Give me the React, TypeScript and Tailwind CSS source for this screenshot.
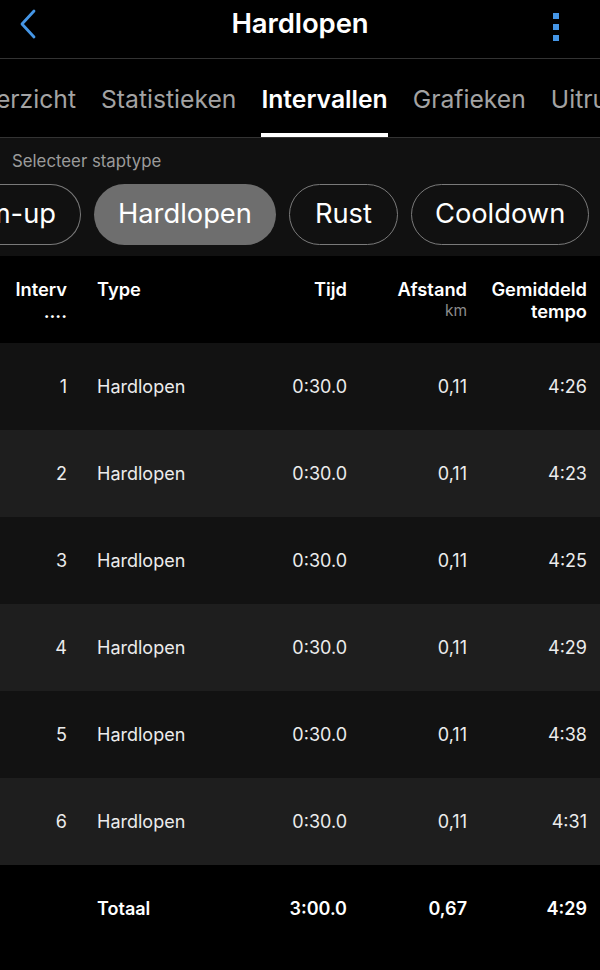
import React from "react";

const rows = [
  ["1", "4:26"],
  ["2", "4:23"],
  ["3", "4:25"],
  ["4", "4:29"],
  ["5", "4:38"],
  ["6", "4:31"],
];

export default function App() {
  return (
    <div className="w-[600px] h-[970px] bg-black text-white overflow-hidden" style={{ fontFamily: "Inter, 'Noto Sans', sans-serif" }}>
      {/* Top bar */}
      <div className="relative h-[58px] flex items-center justify-center pb-[10px]">
        <svg className="absolute left-[18px] top-[9px]" width="22" height="30" viewBox="0 0 22 30" fill="none">
          <polyline points="16,2 4,15 16,28" stroke="#4596e6" strokeWidth="2.8" strokeLinecap="round" strokeLinejoin="round" />
        </svg>
        <div className="text-[27.5px] font-semibold tracking-[-0.1px]">Hardlopen</div>
        <div className="absolute left-[553px] top-[13px] flex flex-col gap-[5px]">
          <div className="w-[6px] h-[6px] bg-[#4596e6]" />
          <div className="w-[6px] h-[6px] bg-[#4596e6]" />
          <div className="w-[6px] h-[6px] bg-[#4596e6]" />
        </div>
      </div>
      {/* Tabs */}
      <div className="h-[80px] border-t border-b border-[#333] overflow-hidden flex items-stretch gap-[25px] whitespace-nowrap text-[24.7px] text-[#a3a3a3]">
        <div className="w-[76px] shrink-0 flex justify-end items-center pt-[4px]">Overzicht</div>
        <div className="shrink-0 flex items-center pt-[4px]">Statistieken</div>
        <div className="shrink-0 flex flex-col items-center justify-center relative text-white font-semibold pt-[4px]">
          <span>Intervallen</span>
          <div className="absolute bottom-0 left-0 right-0 h-[4px] bg-white" />
        </div>
        <div className="shrink-0 flex items-center pt-[4px]">Grafieken</div>
        <div className="shrink-0 flex items-center pt-[4px]">Uitrusting</div>
      </div>
      {/* Step type */}
      <div className="bg-[#111111] h-[118px] pt-[13px]">
        <div className="pl-[12px] text-[16.8px] text-[#9b9b9b] leading-[20px]">Selecteer staptype</div>
        <div className="mt-[13px] flex gap-[13px] overflow-hidden whitespace-nowrap text-[27.3px]">
          <div className="w-[81px] shrink-0 h-[61px] rounded-r-full border border-l-0 border-[#7a7a7a] flex items-center justify-end pr-[24px] overflow-hidden">
            <span>Warm-up</span>
          </div>
          <div className="shrink-0 h-[61px] rounded-full bg-[#6e6e6e] flex items-center px-[24px]">Hardlopen</div>
          <div className="shrink-0 h-[61px] rounded-full border border-[#7a7a7a] flex items-center px-[25px]">Rust</div>
          <div className="shrink-0 h-[61px] rounded-full border border-[#7a7a7a] flex items-center px-[23px]">Cooldown</div>
        </div>
      </div>
      {/* Table header */}
      <div className="h-[87px] grid grid-cols-[67px_160px_120px_120px_120px] pt-[22px] text-[18.3px] font-semibold leading-[22px]">
        <div className="text-right">
          <div>Interv</div>
          <div>....</div>
        </div>
        <div className="pl-[30px]">Type</div>
        <div className="text-right">Tijd</div>
        <div className="text-right">
          <div>Afstand</div>
          <div className="text-[15.5px] font-normal text-[#8a8a8a]">km</div>
        </div>
        <div className="text-right">
          <div>Gemiddeld</div>
          <div>tempo</div>
        </div>
      </div>
      {/* Rows */}
      {rows.map(([n, t], i) => (
        <div
          key={n}
          className={`h-[87px] grid grid-cols-[67px_160px_120px_120px_120px] items-center text-[18px] text-[#ececec] ${i % 2 === 0 ? "bg-[#121212]" : "bg-[#1e1e1e]"}`}
        >
          <div className="text-right">{n}</div>
          <div className="pl-[30px]">Hardlopen</div>
          <div className="text-right">0:30.0</div>
          <div className="text-right">0,11</div>
          <div className="text-right">{t}</div>
        </div>
      ))}
      {/* Total */}
      <div className="h-[87px] grid grid-cols-[67px_160px_120px_120px_120px] items-center text-[18px] font-semibold">
        <div />
        <div className="pl-[30px]">Totaal</div>
        <div className="text-right">3:00.0</div>
        <div className="text-right">0,67</div>
        <div className="text-right">4:29</div>
      </div>
    </div>
  );
}
